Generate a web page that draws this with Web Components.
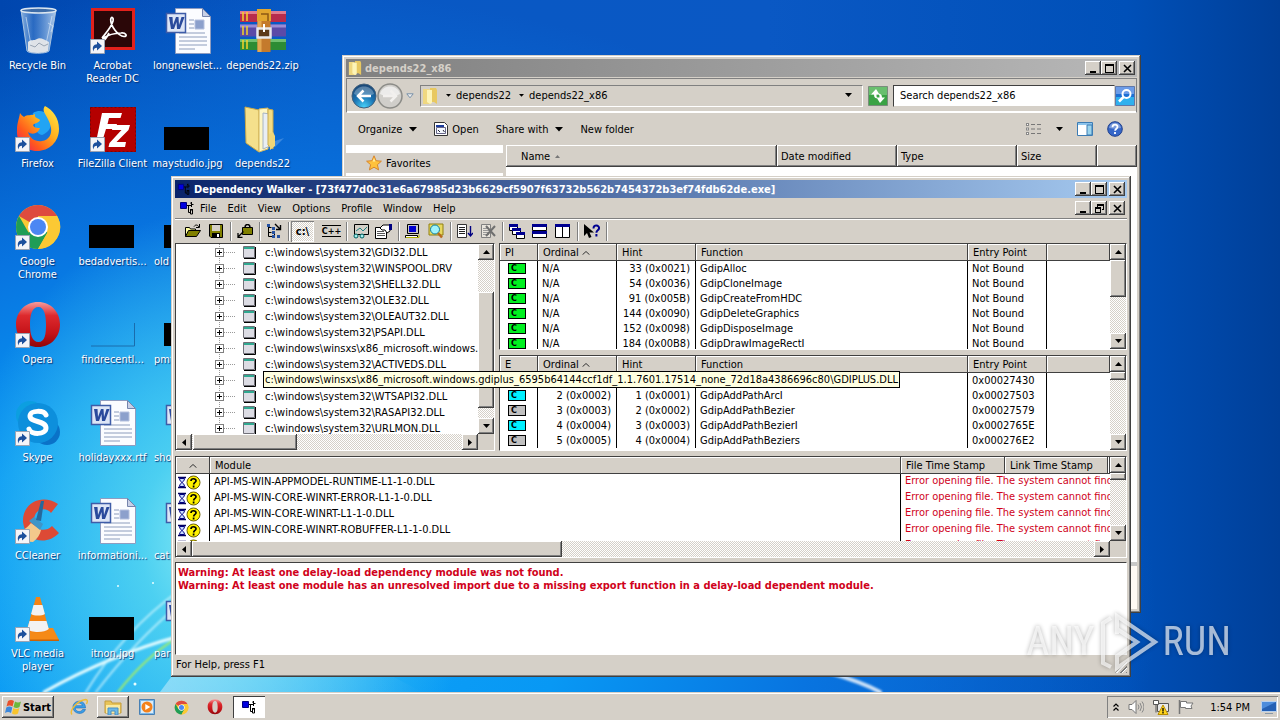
<!DOCTYPE html>
<html lang="en">
<head>
<meta charset="utf-8">
<meta name="viewport" content="width=device-width, initial-scale=1">
<title>Desktop</title>
<style>
  :root {
    --face: #d5d0c8;
    --hilite: #ffffff;
    --shade: #808080;
    --dark: #404040;
    --raised: inset -1px -1px var(--dark), inset 1px 1px var(--hilite), inset -2px -2px var(--shade);
    --pressed: inset 1px 1px var(--shade), inset -1px -1px var(--hilite);
    --dither: repeating-conic-gradient(#ffffff 0 25%, #d5d0c8 0 50%) 0 0 / 2px 2px;
  }
  html, body { height: 100%; margin: 0; }
  body {
    font: 11px/13px "DejaVu Sans Condensed", "DejaVu Sans", sans-serif;
    color: #000;
    overflow: hidden;
  }
</style>
</head>
<body>
<desktop-shell>
  <desktop-wallpaper slot="wallpaper"></desktop-wallpaper>

  <desktop-icon slot="icons" glyph="bin">Recycle Bin</desktop-icon>
  <desktop-icon slot="icons" glyph="firefox" shortcut>Firefox</desktop-icon>
  <desktop-icon slot="icons" glyph="chrome" shortcut>Google Chrome</desktop-icon>
  <desktop-icon slot="icons" glyph="opera" shortcut>Opera</desktop-icon>
  <desktop-icon slot="icons" glyph="skype" shortcut>Skype</desktop-icon>
  <desktop-icon slot="icons" glyph="ccleaner" shortcut>CCleaner</desktop-icon>
  <desktop-icon slot="icons" glyph="vlc" shortcut>VLC media player</desktop-icon>

  <desktop-icon slot="icons" glyph="acrobat" shortcut>Acrobat Reader DC</desktop-icon>
  <desktop-icon slot="icons" glyph="filezilla" shortcut>FileZilla Client</desktop-icon>
  <desktop-icon slot="icons" glyph="black">bedadvertis...</desktop-icon>
  <desktop-icon slot="icons" glyph="clear">findrecentl...</desktop-icon>
  <desktop-icon slot="icons" glyph="word">holidayxxx.rtf</desktop-icon>
  <desktop-icon slot="icons" glyph="word">informationi...</desktop-icon>
  <desktop-icon slot="icons" glyph="black">itnon.jpg</desktop-icon>

  <desktop-icon slot="icons" glyph="word">longnewslet...</desktop-icon>
  <desktop-icon slot="icons" glyph="black">maystudio.jpg</desktop-icon>
  <desktop-icon slot="icons" glyph="black" start>old</desktop-icon>
  <desktop-icon slot="icons" glyph="black" start>pmt</desktop-icon>
  <desktop-icon slot="icons" glyph="word" start>sho</desktop-icon>
  <desktop-icon slot="icons" glyph="word" start>cat</desktop-icon>
  <desktop-icon slot="icons" glyph="word" start>par</desktop-icon>

  <desktop-icon slot="icons" glyph="zip">depends22.zip</desktop-icon>
  <desktop-icon slot="icons" glyph="folderbig">depends22</desktop-icon>

  <explorer-window slot="windows"></explorer-window>
  <walker-window slot="windows"></walker-window>
  <brand-mark slot="windows"></brand-mark>
  <task-bar slot="taskbar"></task-bar>
</desktop-shell>

<script>
// Icon drawings: [viewBox, markup]
const GLYPHS = {
  shortcut: ['0 0 15 15', `<path d="M.5.5h14v14H.5z" fill="#f4f4f8" stroke="#9aa4b4"/><path d="M3.500 12.500C1.800 8 3.600 5.400 7 5.200V2.500l5 4.500-5 4.500V8.800c-2 0-3.500 1-3.500 3.700z" fill="#1c4f9c"/>`],
  bin: ['0 0 48 48', `<defs><linearGradient id="g"><stop offset="0" stop-color="#b8d4ee" stop-opacity=".75"/><stop offset=".35" stop-color="#5a90d4" stop-opacity=".45"/><stop offset="1" stop-color="#d8e8f6" stop-opacity=".8"/></linearGradient></defs><path d="M7 3l6 41c2 3 19 3 22 0l7-41z" fill="url(#g)" stroke="#a9c3df"/><path d="M14 35c3-3 6-1 9-3s8 1 12 3l-1 9c-4 2.500-17 2.500-20 0z" fill="#dfe3e8"/><path d="M16 38l5 2 4-4 5 3 4-2" stroke="#9aa6b4" fill="none"/><ellipse cx="24.500" cy="3.500" rx="17.500" ry="2.500" fill="#3d6ca8" stroke="#dbe6f0" stroke-width="1.500"/><path d="M12 10l5 28M38 9l-6 28M34 16l5 3-2 6" stroke="#e2eef8" stroke-opacity=".6" fill="none"/>`],
  acrobat: ['0 0 48 48', `<path d="M2 1h44v42H2z" fill="#e2211c"/><path d="M5 4h38v36H5z" fill="#2b0708"/><path d="M13 31c3-4 9-10 11-17 .8-4-2-5-2.300-1.500C21.500 19 29 29 35 29.500c4 0 2-4-3-3.500-6 .3-13 2-16.500 4.500-3 2.500-3.500 4.500-1.500 3.500 2-1 4-4 6-8" fill="none" stroke="#fff" stroke-width="1.700"/>`],
  filezilla: ['0 0 48 48', `<path d="M1 2h46v45H1z" fill="#b40000"/><path d="M1.500 2.500h45v44h-45z" fill="none" stroke="#7c0404" stroke-dasharray="2 2"/><path d="M13 8h20l-1.500 5H20l-1.500 6H28l-1.500 5H17l-4 13H7z" fill="#fff"/><path d="M24 20h17l-1.500 5-12 12h9.500L36 42H19.500l1-4 12-13H23z" fill="#fff"/>`],
  firefox: ['0 0 48 48', `<defs><linearGradient id="g" x1="1" y1="0" x2="0" y2="1"><stop offset="0" stop-color="#fff04a"/><stop offset=".4" stop-color="#ffb01e"/><stop offset=".7" stop-color="#ff5a1c"/><stop offset="1" stop-color="#e8106a"/></linearGradient></defs><circle cx="25" cy="23" r="16" fill="#1673d8"/><path d="M19 8c8-5 16 0 18 7 1 9-4 13-9 15-5-1-8-7-7-11z" fill="#22a4f4"/><path d="M31 1c8 4 14 12 14 23 0 13-10 22-22 22S2 37 3 25C3 18 5 14 6 8c1 2 3 3 4 4 3-3 8-1 11-3-1 4 3 4 5 6-1 3-5 3-7 5 1 3 4 3 7 3-2 6-8 7-12 4 2 7 8 10 14 9 7-1 10-7 9-13-1-7-5-12-7-16-1-3 0-5 1-6z" fill="url(#g)"/>`],
  chrome: ['0 0 48 48', `<circle cx="24" cy="24" r="22" fill="#fbc934"/><path d="M24 24L5 13A22 22 0 0 1 43 13H24z" fill="#de4b3f"/><path d="M5 13A22 22 0 0 0 24 46L33.500 29.500 24 24 14.500 29.500z" fill="#1f9d57"/><path d="M24 46A22 22 0 0 0 43.200 13H24l9.500 16.500z" fill="#fbc934"/><circle cx="24" cy="24" r="10" fill="#fff"/><circle cx="24" cy="24" r="8" fill="#4b87f3"/>`],
  opera: ['0 0 48 48', `<defs><linearGradient id="g" x1="0" y1="0" x2="0" y2="1"><stop offset="0" stop-color="#f79c9c"/><stop offset=".3" stop-color="#dd2a2e"/><stop offset=".7" stop-color="#c41218"/><stop offset="1" stop-color="#8e060a"/></linearGradient></defs><path fill-rule="evenodd" d="M24 1c13 0 22 10 22 22.500S37 46 24 46 2 36 2 23.500 11 1 24 1zm.5 5C18 6 16 14 16 23.500S18 41 24.500 41 32 33 32 23.500 30 6 24.500 6z" fill="url(#g)"/>`],
  skype: ['0 0 48 48', `<circle cx="16" cy="16" r="14" fill="#0c9fe0"/><circle cx="33" cy="33" r="13" fill="#0a72c8"/><circle cx="24" cy="24" r="20" fill="#0d8fdc"/><path d="M32 16c-2-5-16-5-16 1 0 7 16 4 16 12 0 7-15 7-17 1" fill="none" stroke="#fff" stroke-width="5" stroke-linecap="round"/>`],
  ccleaner: ['0 0 48 48', `<path d="M44 7C28-4 8 6 9 25c2 20 24 24 36 11l-7-7c-7 7-18 4-18-6 0-11 12-14 17-7z" fill="#dd4a35"/><path d="M1 36c7-1 12-5 16-10l10 7c-1 5-4 9-8 12-7 0-13-3-18-9z" fill="#f3c98c"/><path d="M15 24l5-4 9 7-3 6z" fill="#3f95c8"/><path d="M22 23L27 4h3l-3 20z" fill="#26699c"/>`],
  vlc: ['0 0 48 48', `<path d="M8 33h31l6 12c0 1.500-38 1.500-42 0z" fill="#f58a17"/><path d="M3 44.500h42v1.500H3z" fill="#c96207"/><path d="M22 2h4l9 33c-4 4-18 4-22 0z" fill="#f58413"/><path d="M19.500 10h9l2.400 9c-3 2-11 2-13.800 0zM15.500 26h17l2.300 8c-4 4-18 4-21.600 0z" fill="#f2f2f2"/>`],
  word: ['0 0 48 48', `<path d="M11.500 1.500h27l8 8v37h-35z" fill="#fbfcff" stroke="#8e9cc0"/><path d="M38.500 1.500v8h8z" fill="#c8d0e6" stroke="#7684ac"/><path d="M31 13h9v9h-9z" fill="#8ca0cc" stroke="#b4c0de"/><path d="M25 13h5M25 17h5M25 21h5M15 26h26M15 30h28M15 34h28M15 38h28M15 42h16" stroke="#8c9cbc"/><path d="M2.500 6.500h19v19h-19z" fill="#dde5f6" stroke="#3e5ca8" stroke-width="1.500"/><path d="M5 10h3.500l.5 8 3-8h2.500l.5 8 2.500-8h3l-4.500 12h-3L12.500 15 10 22H7z" fill="#2a4a9c"/>`],
  zip: ['0 0 48 48', `<path d="M1 4h46v11H1z" fill="#b82c4c"/><path d="M1 4h46v3H1z" fill="#e07c90"/><path d="M1 17.500h46v12H1z" fill="#5b4aa8"/><path d="M1 17.500h46v3H1z" fill="#9a8cd4"/><path d="M1 32h46v11H1z" fill="#2c8c34"/><path d="M1 32h46v3H1z" fill="#70c070"/><path d="M4 5v9M8 5v9M4 19v9M8 19v9M4 33v9M8 33v9" stroke="#f4d428" stroke-width="1.500"/><path d="M18.500 2h13v43h-13z" fill="#c47a2c"/><path d="M18.500 2h4v43h-4z" fill="#e4a850"/><path d="M18 2h14v12H18z" fill="#e2a62e"/><path d="M22 7h7v7" fill="none" stroke="#8c5814" stroke-width="1.500"/><path d="M18.500 21.500h13v9h-13z" fill="#5c3818" stroke="#e8e8ec" stroke-width="2.500"/><path d="M25 17v8" stroke="#fff" stroke-width="2"/>`],
  folderbig: ['0 0 48 48', `<path d="M6 2l14 3v42L7 38z" fill="#f5e08c" stroke="#c8a848"/><path d="M20 4l9-1v41l-9 3z" fill="#fdf6c4" stroke="#d4b860"/><path d="M24 8l7 1v32l-7 3z" fill="#e9eef4" stroke="#a8b4c0"/><path d="M29 4l5 1v39l-5-4z" fill="#f3dc84" stroke="#c8a848"/><path d="M34 27l2 4v10l-5 4-1-16z" fill="#efd678"/><path d="M36 36l9-3-9 9z" fill="#9cc4f0" fill-opacity=".35"/>`],
  black: ['0 0 48 48', `<path d="M0 22h45v23H0z" fill="#000"/>`],
  clear: ['0 0 48 48', `<path d="M2 45h43.500V22" fill="none" stroke="#1a6cac"/>`],
  folder: ['0 0 16 16', `<path d="M1 1h6l2 2v13H1z" fill="#f0d880"/><path d="M8 0h6l1 2v14l-3-2H8z" fill="#e8c860"/><path d="M5 2h5v13l-2 1-3-2z" fill="#fdf4b8"/>`],
  back: ['0 0 26 26', `<defs><radialGradient id="g" cx=".5" cy=".95" r=".9"><stop offset="0" stop-color="#48d0f8"/><stop offset=".5" stop-color="#1a74b4"/><stop offset="1" stop-color="#1a4878"/></radialGradient></defs><circle cx="13" cy="13" r="12" fill="url(#g)" stroke="#42607c"/><path d="M3 11C5 1 21 1 23 11c-6 3-14 3-20 0z" fill="#fff" fill-opacity=".28"/><path d="M20 13H7.500M12.500 7.500L7 13l5.500 5.500" fill="none" stroke="#fff" stroke-width="2.500"/>`],
  forward: ['0 0 26 26', `<circle cx="13" cy="13" r="12" fill="#d0ceca" stroke="#8c8c88" stroke-width="1.500"/><path d="M3 11C5 1 21 1 23 11c-6 3-14 3-20 0z" fill="#fff" fill-opacity=".6"/><path d="M6 13h12.500M13.500 7.500L19 13l-5.500 5.500" fill="none" stroke="#f2f0ee" stroke-width="2.500"/>`],
  caretline: ['0 0 8 6', `<path d="M.8.8h6.400L4 4.800z" fill="#eee" stroke="#7890a8"/>`],
  caret: ['0 0 8 5', `<path d="M0 0h8L4 4.500z"/>`],
  refresh: ['0 0 20 20', `<path d="M.5.500h19v19H.5z" fill="#3ba345" stroke="#7a8c7c"/><path d="M1 1h18v8H1z" fill="#7dca80" fill-opacity=".7"/><path d="M8 3L3 8.500h3c0 3 1.500 4 4 4-1.500-1-1.500-2-1.500-4h3zM12 17l5-5.500h-3c0-3-1.500-4-4-4 1.500 1 1.500 2 1.500 4h-3z" fill="#fff"/>`],
  search: ['0 0 20 20', `<path d="M.5.5h19v19H.5z" fill="#1c6fd4" stroke="#6078a8"/><path d="M1 11h18v8H1z" fill="#2fb0ee"/><path d="M1 1h18v7H1z" fill="#6c9ce8"/><circle cx="11.500" cy="8" r="4" fill="none" stroke="#fff" stroke-width="2"/><path d="M8.500 11L4 15.500" stroke="#fff" stroke-width="2.500"/>`],
  application: ['0 0 14 14', `<path d="M.5.5h10l3 3v10H.5z" fill="#fff" stroke="#333"/><path d="M2 3h8v2H2z" fill="#1c3c9c"/><path d="M2.500 5.500h9v6h-9z" fill="#f4f8ff" stroke="#668"/><path d="M4 8l2 2M9 8l1.500 2" stroke="#223"/>`],
  star: ['0 0 16 16', `<path d="M8 .8l2.100 4.900 5.300.5-4 3.500 1.200 5.200L8 12.200 3.400 14.900l1.200-5.200-4-3.500 5.300-.5z" fill="#ffc23c" stroke="#d8862c"/><path d="M8 3l1.300 3.500H6.700z" fill="#fff0a4"/>`],
  views: ['0 0 16 12', `<path d="M0 0h3v3H0zM0 4.500h3v3H0zM0 9h3v3H0z" fill="#888"/><path d="M1 1h1v1H1zM1 5.500h1v1H1zM1 10h1v1H1z" fill="#fff"/><path d="M5 1.500h4M5 6h4M5 10.500h4M11 1.500h4M11 6h4M11 10.500h4" stroke="#777"/>`],
  preview: ['0 0 16 14', `<path d="M.5.5h15v13H.5z" fill="#fff" stroke="#3c7cb4"/><path d="M1 1h14v2H1z" fill="#8cc4ec"/><path d="M10 3h5v10h-5z" fill="#9cd4ec" stroke="#3c7cb4"/>`],
  help: ['0 0 16 16', `<circle cx="8" cy="8" r="7.300" fill="#3566c8" stroke="#20408c"/><path d="M2 7C3 0 13 0 14 7 10 8 6 8 2 7z" fill="#fff" fill-opacity=".35"/><path d="M5.500 6.200C5.500 2.800 10.800 3 10.500 6c-.2 1.700-2.300 1.800-2.400 3.800M8 11v2" fill="none" stroke="#fff" stroke-width="1.800"/>`],
  walker: ['0 0 16 14', `<path d="M1.500 1.500h6v6h-6z" fill="#0000e0" stroke="#000080"/><path d="M8 4.500h4M9.500 4.500v7h2" fill="none" stroke="#000"/><path d="M12.500 1v5M11.500 2.500l1-1.500M14.500 3.500h-2M11.500 9v4h2V9zM11 8.500h3" fill="none" stroke="#000"/>`],
  min: ['0 0 9 9', `<path d="M1 7h6v2H1z"/>`],
  max: ['0 0 9 9', `<path d="M0 0h9v9H0zM1 2v6h7V2z" fill-rule="evenodd"/>`],
  restore: ['0 0 9 9', `<path d="M2 0h7v6H7V5h1V2H3v1H2zM0 3h6v6H0zM1 5v3h4V5z" fill-rule="evenodd"/>`],
  close: ['0 0 9 9', `<path d="M1 1l7 7M8 1L1 8" stroke="#000" stroke-width="1.600"/>`],
  up: ['0 0 7 4', `<path d="M3.500 0L7 4H0z"/>`],
  down: ['0 0 7 4', `<path d="M0 0h7L3.500 4z"/>`],
  left: ['0 0 4 7', `<path d="M4 0v7L0 3.500z"/>`],
  right: ['0 0 4 7', `<path d="M0 0l4 3.500L0 7z"/>`],
  sort: ['0 0 8 4', `<path d="M.5 3.700L4 .5l3.500 3.200" fill="none" stroke="#333"/>`],
  sortsmall: ['0 0 5 3', `<path d="M0 3L2.500 0 5 3z" fill="#777"/>`],
  open: ['0 0 16 14', `<path d="M.5 12.500v-9h4l1 1.500h5v2" fill="#ffffa0" stroke="#000"/><path d="M.5 12.500l3-6h12l-4 6z" fill="#808000" stroke="#000"/><path d="M9 2.500c1.500-2 3.500-2 5 .5M14.500 0v3.500H11" fill="none" stroke="#000"/>`],
  save: ['0 0 14 14', `<path d="M.5.5h13v13H2L.5 12z" fill="#808000" stroke="#000"/><path d="M3 1h8v6H3z" fill="#d5d0c8"/><path d="M3 9h8v5H3z" fill="#000"/><path d="M8 10h2v3H8z" fill="#fff"/>`],
  expand: ['0 0 16 14', `<path d="M5.500 3.500h10v7h-10z" fill="#808000" stroke="#000"/><path d="M8 3.500c0-4 5-4 5 0" fill="none" stroke="#000" stroke-width="1.500"/><path d="M6.500 7.500L1 13M1 9v4.500h4.500" fill="none" stroke="#000" stroke-width="1.300"/>`],
  autoexpand: ['0 0 16 16', `<path d="M2.500 2v11.500h4M2.500 4.500h3M2.500 9.500h3M8.500 11v3" fill="none" stroke="#000"/><path d="M1 1h3v3H1zM6 4h3v3H6zM6 8h3v3H6zM6 12h3v3H6zM11 12h3v3h-3z" fill="#2450a0"/><path d="M9 1l5 5M14.500 2v4.500H10" fill="none" stroke="#000" stroke-width="1.400"/>`],
  preview2: ['0 0 16 15', `<path d="M1.500.5h14v10h-14z" fill="#d5d0c8" stroke="#000"/><path d="M3 7l4-3 3 3 4-4" fill="none" stroke="#208080"/><circle cx="3" cy="12" r="2" fill="#a8f0f0" stroke="#006060"/><circle cx="9" cy="12" r="2" fill="#a8f0f0" stroke="#006060"/>`],
  properties: ['0 0 17 15', `<path d="M.5 3.500h11v11H.5z" fill="#fff" stroke="#000"/><path d="M2 7.500h7M2 9.500h8M2 11.500h8" stroke="#555"/><path d="M5 4l3-3h7v6l-3 2-2-3H7z" fill="#fff" stroke="#000"/><path d="M14 0h3v6h-3z" fill="#000080"/>`],
  computer: ['0 0 15 15', `<path d="M2.500.5h11v9h-11z" fill="#c8c8c8" stroke="#000"/><path d="M4 2h7v6H4z" fill="#0000d0"/><path d="M.5 11.500h12v2H.5z" fill="#fff" stroke="#000"/><path d="M1 13.500h13v-3" fill="none" stroke="#b0b000"/>`],
  find: ['0 0 16 16', `<path d="M1 1h14v11H1z" fill="#e8d860" stroke="#908010"/><circle cx="7" cy="6.500" r="4.500" fill="#a0f4fc" stroke="#107c9c"/><path d="M10 10l4 4.500" stroke="#b86a1c" stroke-width="2.500"/>`],
  log: ['0 0 16 14', `<path d="M.5.5h9v13h-9z" fill="#fff" stroke="#333"/><path d="M2 3.500h6M2 5.500h6M2 7.500h6M2 9.500h6" stroke="#222"/><path d="M13.500 2v10M11 9l2.500 3L16 9" fill="none" stroke="#000080" stroke-width="1.400"/>`],
  logoff: ['0 0 16 15', `<path d="M1.500.5h9v13h-9z" fill="#e8e4dc" stroke="#808080"/><path d="M3 4.500h6M3 6.500h6M3 8.500h6M3 10.500h6" stroke="#999"/><path d="M6 2l9 10M15 2L6 12" stroke="#707070" stroke-width="2"/>`],
  cascade: ['0 0 16 15', `<path d="M.5.5h8v6h-8zM3.500 4.500h8v6h-8zM7.500 8.500h8v6h-8z" fill="#fff" stroke="#000"/><path d="M0 0h9v3H0zM3 4h9v3H3zM7 8h9v3H7z" fill="#000090"/>`],
  tileh: ['0 0 15 14', `<path d="M.5.5h14v6H.5zM.5 7.500h14v6H.5z" fill="#fff" stroke="#000"/><path d="M0 0h15v3H0zM0 7h15v3H0z" fill="#000090"/>`],
  tilev: ['0 0 15 14', `<path d="M.5.5h7v13h-7zM7.500.5h7v13h-7z" fill="#fff" stroke="#000"/><path d="M0 0h15v3H0z" fill="#000090"/>`],
  whatsthis: ['0 0 17 15', `<path d="M1 0v12l3-3 2 5 2.500-1-2-4.500H11z"/><path d="M10.500 4.500c0-4.500 6-3.500 5.500 0-.3 2-2.600 1.800-2.600 4.200M13.400 10v2.500" fill="none" stroke="#000090" stroke-width="2"/>`],
  module: ['0 0 13 13', `<path d="M.5.5h11v11H.5z" fill="#dcdce4" stroke="#707078"/><path d="M1 1h10v2H1z" fill="#30a890"/><path d="M1 12.500h11.500V1" fill="none" stroke="#000"/>`],
  missing: ['0 0 24 15', `<path d="M1 2.500h8M1 12.500h8" stroke="#000060" stroke-width="1.600"/><path d="M2.500 3.500h5c0 2.500-2 3-2 4s2 1.500 2 4h-5c0-2.500 2-3 2-4s-2-1.500-2-4z" fill="#c8dcff" stroke="#000080"/><circle cx="16.500" cy="7.500" r="6.500" fill="#fff200" stroke="#6c6000"/><path d="M14 6c0-3 5.300-3 5 0-.2 1.500-2.300 1.500-2.300 3.500M16.600 10.500v2" fill="none" stroke="#000" stroke-width="1.700"/>`],
  windows: ['0 0 17 16', `<path d="M3 2c2-1.500 4-1.500 6 0L7.500 7.500c-2-1.300-4-1.300-6 0z" fill="#e8502c"/><path d="M10 2.500c2 1.300 4 1.300 6 0L14.500 8c-2 1.300-4 1.300-6 0z" fill="#6cb83c"/><path d="M1.300 8.500c2-1.300 4-1.300 6 0L6 14c-2-1.300-4-1.300-6 0z" fill="#3c88dc"/><path d="M8.300 9c2 1.300 4 1.300 6 0L13 14.500c-2 1.300-4 1.300-6 0z" fill="#f8c42c"/>`],
  ie: ['0 0 18 18', `<path d="M15.500 10H5.200c.3 4 6 4.800 7.300 1.500h3c-2 6-12.500 5-12.500-2.500C3 1.500 15.500.5 15.500 10zM5.300 7.700h7c-.6-3.600-6-3.600-7 0z" fill="#3ba0e8" stroke="#1c68b8" stroke-width=".6" fill-rule="evenodd"/><path d="M2 16.500C-1 13 7 2.500 15.500 1.500c2.500 0 2 2.500 1 4.500" fill="none" stroke="#f0bc34" stroke-width="1.400"/>`],
  explorer: ['0 0 18 16', `<path d="M1 2h6l1 2h9v10H1z" fill="#e8c458" stroke="#c49c3c"/><path d="M2 6h14v8H2z" fill="#fbeaa0"/><path d="M4 9h10v7h-3v-4H7v4H4z" fill="#6cb8e8" stroke="#4890c4"/>`],
  wmp: ['0 0 16 16', `<path d="M.5.5h15v15H.5z" fill="#7cb8e8" stroke="#4880b4"/><path d="M2 2h12v12H2z" fill="#dcecf8"/><circle cx="8" cy="8" r="5.500" fill="#f4821c"/><path d="M6.300 5l5 3-5 3z" fill="#fff"/>`],
  chevrons: ['0 0 6 8', `<path d="M.5 3.500L3 1l2.500 2.500M.5 7.500L3 5l2.500 2.500" fill="none" stroke="#000" stroke-width="1.200"/>`],
  volume: ['0 0 16 14', `<path d="M1 4.500h3l4-4v13l-4-4H1z" fill="#fff" stroke="#777"/><path d="M10 4.500q2 2.500 0 5M12 3q3 4 0 8M14 1.500q4 5.500 0 11" fill="none" stroke="#888"/>`],
  network: ['0 0 16 15', `<path d="M4.500 3.500h11v8h-11z" fill="#e8e8e8" stroke="#555"/><path d="M.5.500h5v4h-5zM3 4.500v8" fill="#fff" stroke="#555"/><path d="M10 5l5 9.500H5z" fill="#ffd51c" stroke="#b88c00"/><path d="M10 8v3.500M10 12v1.500" stroke="#000" stroke-width="1.300"/>`],
  flag: ['0 0 16 14', `<path d="M1.500 0v14" stroke="#777" stroke-width="1.500"/><path d="M2.500 1.500h6v1.500h6.500l-2 3 1 2.500H7.500V7.500h-5z" fill="#fff" stroke="#777"/>`],
  showdesktop: ['0 0 16 13', `<path d="M.5.5h15v10H.5z" fill="#2460b4" stroke="#b8d0ec"/><path d="M1 1h14L1 8z" fill="#4c8cdc"/><path d="M4 12.500h8" stroke="#8898a8"/>`]
};

class AppGlyph extends HTMLElement {
  connectedCallback() {
    const [box, markup] = GLYPHS[this.getAttribute('name')];
    const size = box.split(' ');
    const shadow = this.shadowRoot || this.attachShadow({ mode: 'open' });
    shadow.innerHTML = `
      <style>
        :host { display: inline-block; flex: none; line-height: 0; }
        svg { display: block; }
      </style>
      <svg width="${this.getAttribute('width') || size[2]}" viewBox="${box}" aria-hidden="true">${markup}</svg>
    `;
  }
}
customElements.define('app-glyph', AppGlyph);

class DesktopShell extends HTMLElement {
  constructor() {
    super();
    this.attachShadow({ mode: 'open' }).innerHTML = `
      <style>
        :host { display: flex; flex-direction: column; height: 100vh; }
        main { position: relative; flex: 1; min-height: 0; overflow: hidden; }
        .icons {
          position: relative;
          display: grid;
          grid-template-rows: repeat(7, 98px);
          grid-auto-columns: 75px;
          grid-auto-flow: column;
          width: max-content;
        }
      </style>
      <main>
        <slot name="wallpaper"></slot>
        <div class="icons"><slot name="icons"></slot></div>
        <slot name="windows"></slot>
      </main>
      <slot name="taskbar"></slot>
    `;
  }
}
customElements.define('desktop-shell', DesktopShell);

class DesktopWallpaper extends HTMLElement {
  constructor() {
    super();
    this.attachShadow({ mode: 'open' }).innerHTML = `
      <style>
        :host {
          position: absolute;
          inset: 0;
          background:
            radial-gradient(ellipse 260px 330px at 17% 78%, #8cecf4 0, #5cdcf0cc 30%, #30c0f000 100%),
            radial-gradient(ellipse 900px 620px at 20% 88%, #10a4f8 0, #0898f4 35%, #0874e0 62%, #0048a800 100%),
            linear-gradient(90deg, #0046ae 0, #0858c4 25%, #0a58c4 60%, #0050b8 88%, #003f98 100%);
        }
        svg { display: block; width: 100%; height: 100%; }
      </style>
      <svg viewBox="0 0 1280 692" preserveAspectRatio="none" aria-hidden="true">
        <defs>
          <linearGradient id="ray"><stop offset="0" stop-color="#fff" stop-opacity=".4"/><stop offset="1" stop-color="#fff" stop-opacity="0"/></linearGradient>
          <filter id="soft"><feGaussianBlur stdDeviation="1"/></filter>
        </defs>
        <g fill="none" stroke-linecap="round" filter="url(#soft)">
          <path d="M44 692Q110 655 180 636" stroke="#e4fcff" stroke-width="3"/>
          <path d="M86 692Q124 630 180 590M96 692Q136 640 180 604" stroke="#d8faff" stroke-opacity=".7" stroke-width="2"/>
          <path d="M118 692Q146 656 180 636" stroke="#a8f060" stroke-width="2"/>
          <path d="M640 640Q820 660 880 692" stroke="#fff" stroke-opacity=".8" stroke-width="4"/>
        </g>
        <path d="M172 676h220l30 16H160z" fill="url(#ray)"/>
        <g fill="#e8feff"><circle cx="118" cy="586" r="1"/><circle cx="153" cy="583" r="1"/><circle cx="135" cy="684" r="1.500"/></g>
      </svg>
    `;
  }
}
customElements.define('desktop-wallpaper', DesktopWallpaper);

class DesktopIcon extends HTMLElement {
  connectedCallback() {
    const shortcut = this.hasAttribute('shortcut') ? '<app-glyph class="arrow" name="shortcut"></app-glyph>' : '';
    this.attachShadow({ mode: 'open' }).innerHTML = `
      <style>
        :host {
          display: flex;
          flex-direction: column;
          align-items: center;
          gap: 4px;
          padding-top: 7px;
          color: #fff;
          text-align: center;
          text-shadow: 1px 1px 1px #0a3070;
        }
        :host([start]) .label { align-self: flex-start; padding-left: 4px; }
        .picture { position: relative; width: 48px; height: 48px; }
        .arrow { position: absolute; left: 1px; bottom: 1px; }
        .label { max-width: 75px; }
      </style>
      <div class="picture"><app-glyph name="${this.getAttribute('glyph')}"></app-glyph>${shortcut}</div>
      <div class="label"><slot></slot></div>
    `;
  }
}
customElements.define('desktop-icon', DesktopIcon);

class WindowButtons extends HTMLElement {
  connectedCallback() {
    const middle = this.hasAttribute('child') ? 'restore' : 'max';
    const label = middle === 'max' ? 'Maximize' : 'Restore';
    this.attachShadow({ mode: 'open' }).innerHTML = `
      <style>
        :host { display: flex; flex: none; }
        button {
          display: grid;
          place-items: center;
          width: 16px;
          height: 14px;
          padding: 0;
          border: 0;
          background: var(--face);
          box-shadow: var(--raised);
        }
        .close { margin-left: 2px; }
      </style>
      <button aria-label="Minimize"><app-glyph name="min"></app-glyph></button>
      <button aria-label="${label}"><app-glyph name="${middle}"></app-glyph></button>
      <button class="close" aria-label="Close"><app-glyph name="close"></app-glyph></button>
    `;
  }
}
customElements.define('window-buttons', WindowButtons);

class ClassicWindow extends HTMLElement {
  connectedCallback() {
    this.attachShadow({ mode: 'open' }).innerHTML = `
      <style>
        :host {
          display: flex;
          flex-direction: column;
          box-sizing: border-box;
          height: 100%;
          padding: 4px;
          background: var(--face);
          box-shadow: inset -1px -1px var(--dark), inset 1px 1px var(--face), inset -2px -2px var(--shade), inset 2px 2px var(--hilite);
        }
        header {
          display: flex;
          align-items: center;
          flex: none;
          gap: 3px;
          height: 18px;
          padding: 0 2px;
          background: linear-gradient(90deg, #808080, #b8b8b8);
          color: var(--face);
          font-weight: bold;
        }
        :host([active]) header { background: linear-gradient(90deg, #0a246a, #a6caf0); color: #fff; }
        .title { flex: 1; min-width: 0; overflow: hidden; white-space: nowrap; text-overflow: ellipsis; }
      </style>
      <header>
        <app-glyph name="${this.getAttribute('glyph')}" width="14"></app-glyph>
        <span class="title">${this.getAttribute('caption')}</span>
        <window-buttons></window-buttons>
      </header>
      <slot></slot>
    `;
  }
}
customElements.define('classic-window', ClassicWindow);

// start and size are the thumb's offset and length inside the track
class ScrollStrip extends HTMLElement {
  connectedCallback() {
    const across = this.hasAttribute('across');
    const start = this.getAttribute('start');
    const size = this.getAttribute('size');
    this.attachShadow({ mode: 'open' }).innerHTML = `
      <style>
        :host { display: flex; flex-direction: ${across ? 'row' : 'column'}; min-width: 16px; min-height: 16px; background: var(--dither); }
        button {
          display: grid;
          place-items: center;
          flex: none;
          width: 16px;
          height: 16px;
          padding: 0;
          border: 0;
          background: var(--face);
          box-shadow: var(--raised);
        }
        .track { display: flex; flex: 1; flex-direction: inherit; min-height: 0; padding-${across ? 'left' : 'top'}: ${start}px; }
        .thumb { flex: 0 1 ${size}px; background: var(--face); box-shadow: var(--raised); }
      </style>
      <button aria-label="Scroll back"><app-glyph name="${across ? 'left' : 'up'}"></app-glyph></button>
      <div class="track"><div class="thumb"></div></div>
      <button aria-label="Scroll on"><app-glyph name="${across ? 'right' : 'down'}"></app-glyph></button>
    `;
  }
}
customElements.define('scroll-strip', ScrollStrip);

class ExplorerWindow extends HTMLElement {
  constructor() {
    super();
    this.attachShadow({ mode: 'open' }).innerHTML = `
      <style>
        :host { position: absolute; inset: 55px 139px 79px 342px; }
        button { display: flex; align-items: center; gap: 4px; padding: 0; border: 0; background: none; font: inherit; color: inherit; }
        nav { display: flex; align-items: center; flex: none; height: 33px; margin-top: 1px; padding: 0 1px 0 4px; border: 1px solid var(--shade); border-bottom-color: var(--hilite); box-shadow: 0 -1px var(--hilite) inset; }
        .recent { margin-left: 3px; }
        .address {
          display: flex; align-items: center; flex: 1; gap: 8px; height: 20px; margin-left: 6px; padding: 0 10px 0 1px;
          border: 1px solid; border-color: var(--shade) var(--hilite) var(--hilite) var(--shade);
        }
        .address .crumb { gap: 5px; }
        .address .drop { margin-left: auto; }
        .go { margin: 0 5px; }
        input {
          width: 222px; height: 22px; box-sizing: border-box; padding: 0 6px; border: 1px solid; outline: 0;
          border-color: var(--dark) var(--face) var(--face) var(--dark); background: #fff; font: inherit; color: #000;
        }
        input::placeholder { color: #000; opacity: 1; }
        .commands { display: flex; align-items: center; flex: none; gap: 17px; height: 32px; padding: 0 14px 0 12px; }
        .commands .first { gap: 7px; }
        .commands .right { display: flex; align-items: center; gap: 14px; margin-left: auto; }
        .view { display: grid; flex: 1; grid-template-columns: 157px 1fr; gap: 3px; min-height: 0; }
        aside { background: #fff; padding-top: 8px; }
        .favorites { display: flex; align-items: center; gap: 4px; height: 20px; padding-left: 20px; background: var(--face); }
        .files { background: #fff; overflow: hidden; }
        table { width: 100%; border-collapse: collapse; table-layout: fixed; }
        th { height: 22px; padding: 0 0 0 4px; box-sizing: border-box; background: var(--face); box-shadow: var(--raised); font-weight: normal; text-align: left; }
        th:first-child { padding-left: 15px; }
        .name { display: inline-flex; align-items: center; gap: 5px; }
        footer { flex: none; height: 43px; border-top: 4px solid #c8c8c8; background: #fffaf4; }
      </style>
      <classic-window caption="depends22_x86" glyph="folder">
        <nav>
          <button aria-label="Back"><app-glyph name="back"></app-glyph></button>
          <button aria-label="Forward"><app-glyph name="forward"></app-glyph></button>
          <button class="recent" aria-label="Recent pages"><app-glyph name="caretline"></app-glyph></button>
          <div class="address">
            <app-glyph name="folder"></app-glyph>
            <button class="crumb"><app-glyph name="caret" width="5"></app-glyph>depends22</button>
            <button class="crumb"><app-glyph name="caret" width="5"></app-glyph>depends22_x86</button>
            <button class="drop" aria-label="Previous locations"><app-glyph name="caret" width="7"></app-glyph></button>
          </div>
          <button class="go" aria-label="Refresh"><app-glyph name="refresh"></app-glyph></button>
          <input type="text" aria-label="Search" placeholder="Search depends22_x86">
          <button aria-label="Start search"><app-glyph name="search"></app-glyph></button>
        </nav>
        <div class="commands">
          <button class="first">Organize <app-glyph name="caret"></app-glyph></button>
          <button><app-glyph name="application"></app-glyph>Open</button>
          <button class="first">Share with <app-glyph name="caret"></app-glyph></button>
          <button>New folder</button>
          <div class="right">
            <button aria-label="Views"><app-glyph name="views"></app-glyph></button>
            <button aria-label="More views"><app-glyph name="caret" width="7"></app-glyph></button>
            <button aria-label="Preview pane"><app-glyph name="preview"></app-glyph></button>
            <button aria-label="Help"><app-glyph name="help"></app-glyph></button>
          </div>
        </div>
        <div class="view">
          <aside><div class="favorites"><app-glyph name="star"></app-glyph>Favorites</div></aside>
          <div class="files">
            <table>
              <colgroup><col><col width="120"><col width="120"><col width="80"><col width="40"></colgroup>
              <thead><tr>
                <th><span class="name">Name <app-glyph name="sortsmall"></app-glyph></span></th>
                <th>Date modified</th><th>Type</th><th>Size</th><th></th>
              </tr></thead>
            </table>
          </div>
        </div>
        <footer></footer>
      </classic-window>
    `;
  }
}
customElements.define('explorer-window', ExplorerWindow);

class ToolStrip extends HTMLElement {
  constructor() {
    super();
    this.attachShadow({ mode: 'open' }).innerHTML = `
      <style>
        :host {
          display: flex; align-items: center; flex: none; box-sizing: border-box; height: 25px; padding-left: 6px;
          border-top: 1px solid var(--shade); box-shadow: inset 0 1px var(--hilite);
        }
        button { display: grid; place-items: center; width: 23px; height: 21px; padding: 0; border: 0; background: none; font: bold 11px/13px "DejaVu Sans Condensed", sans-serif; color: #000; }
        .on { margin-right: 6px; background: var(--dither); box-shadow: var(--pressed); }
        .lined { border: solid #000; border-width: 1px 0; font-size: 9px; line-height: 10px; }
        i { width: 1px; height: 19px; margin: 0 1px 0 3px; border-right: 1px solid var(--hilite); background: var(--shade); }
      </style>
      <button aria-label="Open"><app-glyph name="open"></app-glyph></button>
      <button aria-label="Save"><app-glyph name="save"></app-glyph></button><i></i>
      <button aria-label="Expand all"><app-glyph name="expand"></app-glyph></button><i></i>
      <button aria-label="Auto expand"><app-glyph name="autoexpand"></app-glyph></button><i></i>
      <button class="on">c:\\</button>
      <button><span class="lined">C++</span></button><i></i>
      <button aria-label="View module"><app-glyph name="preview2"></app-glyph></button>
      <button aria-label="Properties"><app-glyph name="properties"></app-glyph></button><i></i>
      <button aria-label="System information"><app-glyph name="computer"></app-glyph></button>
      <button aria-label="Find"><app-glyph name="find"></app-glyph></button><i></i>
      <button aria-label="Start profiling"><app-glyph name="log"></app-glyph></button>
      <button aria-label="Stop profiling"><app-glyph name="logoff"></app-glyph></button><i></i>
      <button aria-label="Cascade"><app-glyph name="cascade"></app-glyph></button>
      <button aria-label="Tile horizontally"><app-glyph name="tileh"></app-glyph></button>
      <button aria-label="Tile vertically"><app-glyph name="tilev"></app-glyph></button><i></i>
      <button aria-label="Context help"><app-glyph name="whatsthis"></app-glyph></button><i></i>
    `;
  }
}
customElements.define('tool-strip', ToolStrip);

class ModuleTree extends HTMLElement {
  connectedCallback() {
    const paths = ['system32\\GDI32.DLL', 'system32\\WINSPOOL.DRV', 'system32\\SHELL32.DLL', 'system32\\OLE32.DLL',
      'system32\\OLEAUT32.DLL', 'system32\\PSAPI.DLL', 'winsxs\\x86_microsoft.windows.', 'system32\\ACTIVEDS.DLL',
      '', 'system32\\WTSAPI32.DLL', 'system32\\RASAPI32.DLL', 'system32\\URLMON.DLL'];
    const rows = paths.map(p => `
      <li><button aria-label="Expand"></button><app-glyph name="module"></app-glyph><span>${p && 'c:\\windows\\' + p}</span></li>`).join('');
    this.attachShadow({ mode: 'open' }).innerHTML = `
      <style>
        :host { display: grid; grid-template: 1fr 16px / 1fr 16px; min-height: 0; overflow: hidden; border: 1px solid; border-color: var(--dark) var(--hilite) var(--hilite) var(--dark); background: #fff; }
        ul { margin: 0; padding: 0; list-style: none; overflow: hidden; min-width: 0; min-height: 0; }
        li {
          display: flex; align-items: center; height: 16px; padding-left: 39px; white-space: nowrap;
          background: repeating-linear-gradient(#999 0 1px, #fff 1px 2px) 43px 0 / 1px 16px no-repeat, repeating-linear-gradient(90deg, #999 0 1px, #fff 1px 2px) 48px 8px / 12px 1px no-repeat;
        }
        button { flex: none; width: 9px; height: 9px; padding: 0; border: 1px solid #808080; background: linear-gradient(#000, #000) 50% 50% / 5px 1px no-repeat, linear-gradient(#000, #000) 50% 50% / 1px 5px no-repeat, #fff; }
        app-glyph { margin: 0 9px 0 19px; }
        .corner { background: var(--face); }
      </style>
      <ul>${rows}</ul>
      <scroll-strip start="32" size="116"></scroll-strip>
      <scroll-strip across start="1" size="104"></scroll-strip>
      <div class="corner"></div>
    `;
  }
}
customElements.define('module-tree', ModuleTree);

const IMPORTS = [
  ['#00f020', 'N/A', '33 (0x0021)', 'GdipAlloc', 'Not Bound'],
  ['#00f020', 'N/A', '54 (0x0036)', 'GdipCloneImage', 'Not Bound'],
  ['#00f020', 'N/A', '91 (0x005B)', 'GdipCreateFromHDC', 'Not Bound'],
  ['#00f020', 'N/A', '144 (0x0090)', 'GdipDeleteGraphics', 'Not Bound'],
  ['#00f020', 'N/A', '152 (0x0098)', 'GdipDisposeImage', 'Not Bound'],
  ['#00f020', 'N/A', '184 (0x00B8)', 'GdipDrawImageRectI', 'Not Bound']
];
const EXPORTS = [
  ['#c0c0c0', '', '', '', '0x00027430'],
  ['#00f0ff', '2 (0x0002)', '1 (0x0001)', 'GdipAddPathArcI', '0x00027503'],
  ['#c0c0c0', '3 (0x0003)', '2 (0x0002)', 'GdipAddPathBezier', '0x00027579'],
  ['#00f0ff', '4 (0x0004)', '3 (0x0003)', 'GdipAddPathBezierI', '0x0002765E'],
  ['#c0c0c0', '5 (0x0005)', '4 (0x0004)', 'GdipAddPathBeziers', '0x000276E2']
];

const LIST_STYLE = `
  :host { display: grid; min-height: 0; overflow: hidden; border: 1px solid; border-color: var(--dark) var(--hilite) var(--hilite) var(--dark); background: #fff; }
  .rows { min-width: 0; min-height: 0; overflow: hidden; }
  table { width: 100%; border-collapse: separate; border-spacing: 0; table-layout: fixed; white-space: nowrap; }
  th, td { box-sizing: border-box; padding: 0 5px 0 4px; overflow: hidden; text-align: left; }
  th { height: 17px; padding-left: 5px; background: var(--face); box-shadow: inset -1px -1px var(--dark), inset 1px 1px var(--hilite); font-weight: normal; line-height: 15px; }
  th app-glyph { vertical-align: middle; }
`;

class FunctionList extends HTMLElement {
  connectedCallback() {
    const exports = this.hasAttribute('exports');
    const rows = (exports ? EXPORTS : IMPORTS).map(([color, ordinal, hint, name, entry]) => `
      <tr><td><span class="badge" style="background: ${color}">C</span></td><td class="${exports ? 'number' : ''}">${ordinal}</td><td class="number">${hint}</td><td>${name}</td><td>${entry}</td><td></td></tr>`).join('');
    this.attachShadow({ mode: 'open' }).innerHTML = `
      <style>
        ${LIST_STYLE}
        :host { grid-template-columns: 1fr 16px; }
        td { height: 15px; border-right: 1px solid #000; line-height: 15px; }
        td:last-child { border: 0; }
        td:first-child { padding: 0 0 0 8px; }
        .number { text-align: right; }
        .badge { display: block; width: 16px; height: 9px; border: 1px solid #000; font: bold 9px/9px "DejaVu Sans Condensed", sans-serif; text-indent: 2px; }
      </style>
      <div class="rows">
        <table>
          <colgroup><col width="38"><col width="79"><col width="79"><col><col width="79"><col width="63"></colgroup>
          <thead><tr><th>${exports ? 'E' : 'PI'}</th><th>Ordinal <app-glyph name="sort"></app-glyph></th><th>Hint</th><th>Function</th><th>Entry Point</th><th></th></tr></thead>
          <tbody>${rows}</tbody>
        </table>
      </div>
      <scroll-strip start="0" size="${exports ? 8 : 37}"></scroll-strip>
    `;
  }
}
customElements.define('function-list', FunctionList);

class ModuleList extends HTMLElement {
  connectedCallback() {
    const names = ['API-MS-WIN-APPMODEL-RUNTIME-L1-1-0.DLL', 'API-MS-WIN-CORE-WINRT-ERROR-L1-1-0.DLL',
      'API-MS-WIN-CORE-WINRT-L1-1-0.DLL', 'API-MS-WIN-CORE-WINRT-ROBUFFER-L1-1-0.DLL', ''];
    const rows = names.map(n => `
      <tr><td><app-glyph name="missing"></app-glyph></td><td>${n}</td><td colspan="3">Error opening file. The system cannot find</td></tr>`).join('');
    this.attachShadow({ mode: 'open' }).innerHTML = `
      <style>
        ${LIST_STYLE}
        :host { grid-template: 1fr 16px / 1fr 16px; }
        td { height: 16px; line-height: 16px; }
        td:nth-child(1), td:nth-child(2) { border-right: 1px solid #000; }
        td:first-child { padding: 0 0 0 1px; }
        td:last-child { padding-right: 0; color: #d0021b; line-height: 14px; vertical-align: top; }
        td app-glyph { display: block; }
        th:first-child { padding: 0; text-align: center; }
        .corner { background: var(--face); }
      </style>
      <div class="rows">
        <table>
          <colgroup><col width="34"><col><col width="104"><col width="103"><col width="2"></colgroup>
          <thead><tr><th aria-label="Status"><app-glyph name="sort"></app-glyph></th><th>Module</th><th>File Time Stamp</th><th>Link Time Stamp</th><th></th></tr></thead>
          <tbody>${rows}</tbody>
        </table>
      </div>
      <scroll-strip start="0" size="7"></scroll-strip>
      <scroll-strip across start="0" size="370"></scroll-strip>
      <div class="corner"></div>
    `;
  }
}
customElements.define('module-list', ModuleList);

class WalkerWindow extends HTMLElement {
  constructor() {
    super();
    this.attachShadow({ mode: 'open' }).innerHTML = `
      <style>
        :host { position: absolute; inset: 176px 149px 15px 171px; }
        .menu { display: flex; align-items: center; flex: none; gap: 11px; height: 18px; margin: 1px 0; padding: 0 2px 0 4px; }
        .menu button { padding: 0; border: 0; background: none; font: inherit; color: inherit; }
        .menu app-glyph { margin-right: -6px; }
        .menu window-buttons { margin-left: auto; }
        .split { display: grid; flex: none; grid-template-columns: 320px 1fr; gap: 4px; height: 208px; margin-bottom: 5px; }
        .lists { display: grid; grid-template-rows: 107px 96px; gap: 5px; min-width: 0; }
        module-list { flex: none; height: 100px; margin-bottom: 4px; }
        .log {
          flex: 1; margin: 0; padding: 3px 2px; border: 1px solid; border-color: var(--dark) var(--hilite) var(--hilite) var(--dark);
          background: #fff; color: #d0021b; font-weight: bold;
        }
        .log p { margin: 0; }
        .status { display: flex; align-items: center; justify-content: space-between; flex: none; height: 18px; padding-left: 1px; }
        .grip { align-self: flex-end; width: 12px; height: 12px; background: repeating-linear-gradient(135deg, var(--shade) 0 1px, var(--hilite) 1px 2px, var(--face) 2px 4px); clip-path: polygon(100% 0, 100% 100%, 0 100%); }
        .tip { position: absolute; top: 195px; left: 92px; padding: 1px 1px; border: 1px solid #000; background: #ffffe1; white-space: nowrap; }
      </style>
      <classic-window active glyph="walker" caption="Dependency Walker - [73f477d0c31e6a67985d23b6629cf5907f63732b562b7454372b3ef74fdb62de.exe]">
        <div class="menu">
          <app-glyph name="walker"></app-glyph>
          <button>File</button><button>Edit</button><button>View</button><button>Options</button>
          <button>Profile</button><button>Window</button><button>Help</button>
          <window-buttons child></window-buttons>
        </div>
        <tool-strip></tool-strip>
        <div class="split">
          <module-tree></module-tree>
          <div class="lists">
            <function-list></function-list>
            <function-list exports></function-list>
          </div>
        </div>
        <module-list></module-list>
        <div class="log" role="log">
          <p>Warning: At least one delay-load dependency module was not found.</p>
          <p>Warning: At least one module has an unresolved import due to a missing export function in a delay-load dependent module.</p>
        </div>
        <div class="status"><span>For Help, press F1</span><span class="grip"></span></div>
      </classic-window>
      <div class="tip" role="tooltip">c:\\windows\\winsxs\\x86_microsoft.windows.gdiplus_6595b64144ccf1df_1.1.7601.17514_none_72d18a4386696c80\\GDIPLUS.DLL</div>
    `;
  }
}
customElements.define('walker-window', WalkerWindow);

class BrandMark extends HTMLElement {
  constructor() {
    super();
    this.attachShadow({ mode: 'open' }).innerHTML = `
      <style>
        :host {
          position: absolute; right: 49px; bottom: 20px; display: flex; align-items: center; gap: 4px;
          color: #ffffffa8; font: 400 40px/60px "Roboto Condensed", "Liberation Sans Narrow", sans-serif; filter: drop-shadow(0 0 2px #00000070);
        }
      </style>
      <span>ANY</span>
      <svg width="60" height="60" viewBox="0 0 60 60" fill="none" stroke="#fff" stroke-opacity=".65" stroke-width="4" aria-hidden="true">
        <path d="M18 22V4l38 26-38 26V44l20-14-20-13M12 6L4 11v40l8 4"/>
      </svg>
      <span>RUN</span>
    `;
  }
}
customElements.define('brand-mark', BrandMark);

class TaskBar extends HTMLElement {
  constructor() {
    super();
    this.attachShadow({ mode: 'open' }).innerHTML = `
      <style>
        :host {
          display: flex; align-items: center; flex: none; box-sizing: border-box; height: 28px; padding: 3px 2px 1px;
          background: var(--face); box-shadow: inset 0 1px var(--face), inset 0 2px var(--hilite);
        }
        button { display: flex; align-items: center; justify-content: center; gap: 1px; height: 22px; padding: 0; border: 0; background: none; color: #000; font: inherit; }
        .start { width: 52px; font: bold 11px/13px "DejaVu Sans Condensed", sans-serif; }
        .start, .open { box-shadow: var(--raised); }
        .apps { display: flex; gap: 2px; margin-left: 9px; }
        .apps button { width: 32px; }
        .apps .active { background: #fff; box-shadow: inset 1px 1px var(--dark), inset -1px -1px var(--hilite); }
        .tray { display: flex; align-items: center; gap: 9px; height: 22px; margin-left: auto; padding: 0 1px 0 6px; box-shadow: var(--pressed); }
        time { margin: 0 2px 0 7px; }
      </style>
      <button class="start"><app-glyph name="windows"></app-glyph>Start</button>
      <div class="apps">
        <button aria-label="Internet Explorer"><app-glyph name="ie"></app-glyph></button>
        <button class="open" aria-label="Windows Explorer"><app-glyph name="explorer"></app-glyph></button>
        <button aria-label="Windows Media Player"><app-glyph name="wmp"></app-glyph></button>
        <button aria-label="Google Chrome"><app-glyph name="chrome" width="15"></app-glyph></button>
        <button aria-label="Opera"><app-glyph name="opera" width="16"></app-glyph></button>
        <button class="active" aria-label="Dependency Walker"><app-glyph name="walker"></app-glyph></button>
      </div>
      <div class="tray">
        <app-glyph name="chevrons"></app-glyph>
        <app-glyph name="volume"></app-glyph>
        <app-glyph name="network"></app-glyph>
        <app-glyph name="flag"></app-glyph>
        <time>1:54 PM</time>
        <button aria-label="Show desktop"><app-glyph name="showdesktop"></app-glyph></button>
      </div>
    `;
  }
}
customElements.define('task-bar', TaskBar);
</script>
</body>
</html>
